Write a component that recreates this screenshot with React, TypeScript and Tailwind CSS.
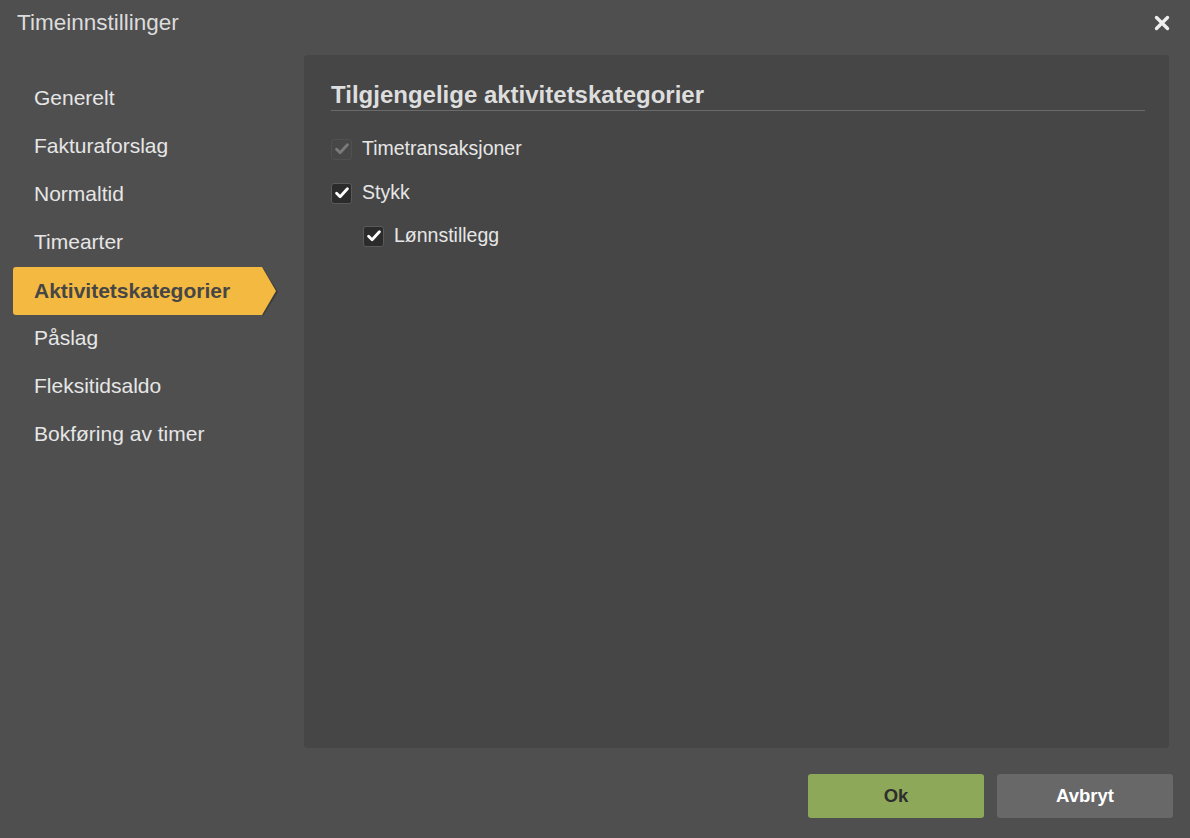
import { useState } from "react";

const navItems = [
  "Generelt",
  "Fakturaforslag",
  "Normaltid",
  "Timearter",
  "Aktivitetskategorier",
  "Påslag",
  "Fleksitidsaldo",
  "Bokføring av timer",
];

function Check({ checked, disabled }: { checked: boolean; disabled?: boolean }) {
  return (
    <span
      className={
        "flex h-[21px] w-[21px] shrink-0 items-center justify-center rounded-[3px] border " +
        (disabled ? "border-[#505050] bg-[#474747]" : "border-[#5a5a5a] bg-[#2b2b2b]")
      }
    >
      {checked && (
        <svg width="14" height="12" viewBox="0 0 14 12">
          <path
            d="M1.6 6.3 L5.1 9.8 L12.4 1.8"
            fill="none"
            stroke={disabled ? "#7a7a7a" : "#ffffff"}
            strokeWidth="2.8"
            strokeLinecap="round"
            strokeLinejoin="round"
          />
        </svg>
      )}
    </span>
  );
}

export default function App() {
  const [active, setActive] = useState("Aktivitetskategorier");
  const [stykk, setStykk] = useState(true);
  const [lonn, setLonn] = useState(true);

  return (
    <div className="flex h-[838px] w-[1190px] flex-col bg-[#4f4f4f] font-['Liberation_Sans',Arial,sans-serif] text-[#e4e4e4]">
      {/* header */}
      <div className="flex h-[55px] shrink-0 items-start justify-between pl-[17px] pr-[20px] pt-[9px]">
        <h1 className="text-[22.5px] leading-[28px] text-[#dcdcdc]">Timeinnstillinger</h1>
        <button className="mt-[6px]" aria-label="Lukk">
          <svg width="16" height="16" viewBox="0 0 16 16">
            <path d="M2.5 2.5 L13.5 13.5 M13.5 2.5 L2.5 13.5" stroke="#eeeeee" strokeWidth="3.4" strokeLinecap="round" />
          </svg>
        </button>
      </div>

      <div className="flex min-h-0 flex-1 pr-[21px]">
        {/* sidebar */}
        <nav className="flex w-[304px] shrink-0 flex-col pl-[13px] pt-[19px]">
          {navItems.map((item) =>
            item === active ? (
              <div key={item} className="relative mt-[1px] -mb-[1px] flex h-[48px] w-[263px] items-center">
                <svg className="absolute left-0 top-0" width="266" height="50" viewBox="0 0 266 50">
                  <path d="M250 1 L265 25 L250 49 Z" fill="#2e2e2e" opacity="0.55" />
                  <path d="M3 0 H249 L263 24 L249 48 H3 Q0 48 0 45 V3 Q0 0 3 0 Z" fill="#f4b940" />
                </svg>
                <span className="relative -mt-[1px] pl-[21px] text-[21px] font-bold text-[#464646]">{item}</span>
              </div>
            ) : (
              <button
                key={item}
                onClick={() => setActive(item)}
                className="flex h-[48px] items-center pl-[21px] text-left text-[21px] text-[#e6e6e6]"
              >
                {item}
              </button>
            )
          )}
        </nav>

        {/* content panel */}
        <div className="flex-1 rounded-[4px] bg-[#464646] pl-[27px] pr-[24px] pt-[26px]">
          <h2 className="border-b border-[#6a6a6a] pb-[1px] text-[24px] font-bold leading-[28px] text-[#dedede]">
            Tilgjengelige aktivitetskategorier
          </h2>
          <div className="mt-[16px] flex flex-col text-[19.5px]">
            <label className="flex h-[44px] items-center gap-[10px]">
              <Check checked disabled />
              <span className="text-[#e6e6e6]">Timetransaksjoner</span>
            </label>
            <label className="flex h-[44px] items-center gap-[10px]" onClick={() => setStykk(!stykk)}>
              <Check checked={stykk} />
              <span className="text-[#e6e6e6]">Stykk</span>
            </label>
            <label className="ml-[32px] flex h-[42px] items-center gap-[10px]" onClick={() => setLonn(!lonn)}>
              <Check checked={lonn} />
              <span className="text-[#e6e6e6]">Lønnstillegg</span>
            </label>
          </div>
        </div>
      </div>

      {/* footer */}
      <div className="flex h-[90px] shrink-0 items-start justify-end gap-[13px] pr-[17px] pt-[26px]">
        <button className="h-[44px] w-[176px] rounded-[3px] bg-[#8da858] text-[18.5px] font-bold text-[#2e2e2e]">Ok</button>
        <button className="h-[44px] w-[176px] rounded-[3px] bg-[#686868] text-[18.5px] font-bold text-white">Avbryt</button>
      </div>
    </div>
  );
}
